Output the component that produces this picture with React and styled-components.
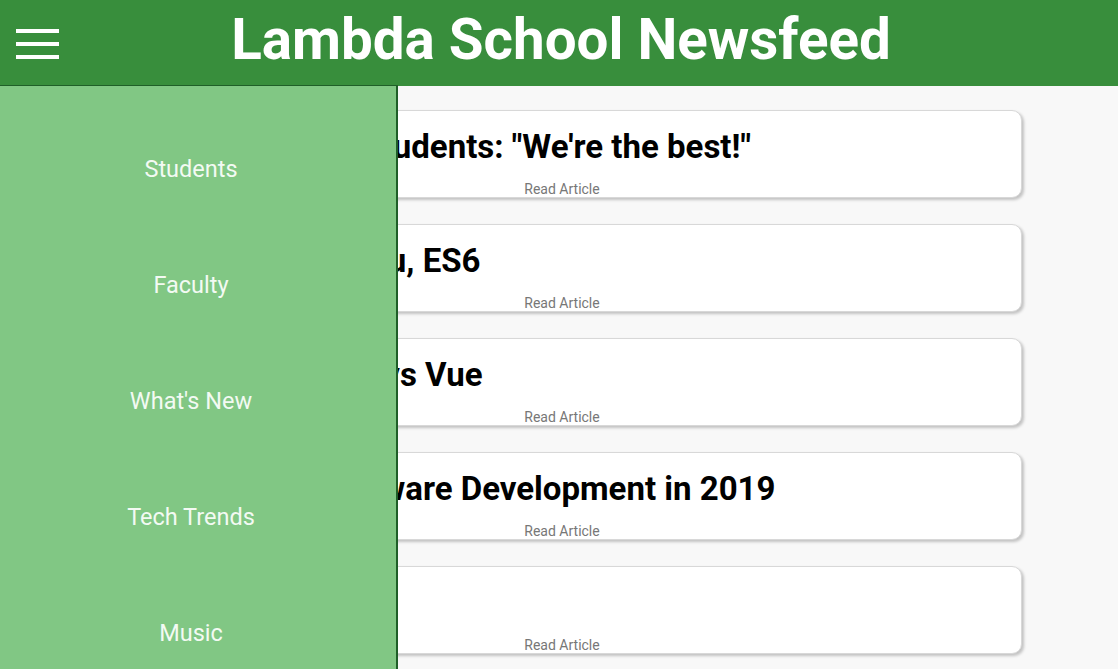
import React from 'react';
import styled, { createGlobalStyle } from 'styled-components';

// ---- data
const articles = [
  { title: 'Lambda School Students: "We\'re the best!"' },
  { title: 'Javascript and You, ES6' },
  { title: 'React vs Angular vs Vue' },
  { title: 'Professional Software Development in 2019' },
  { title: 'Lambda Labs' },
];

const menuItems = ['Students', 'Faculty', "What's New", 'Tech Trends', 'Music', 'Log Out'];

// ---- page
const App = () => {
  return (
    <>
      <GlobalStyle />
      <Header>
        <MenuButton aria-label="menu">
          <Bar />
          <Bar />
          <Bar />
        </MenuButton>
        <Title>Lambda School Newsfeed</Title>
        <span />
      </Header>

      <Menu>
        <MenuList>
          {menuItems.map((item) => (
            <MenuItem key={item}>{item}</MenuItem>
          ))}
        </MenuList>
      </Menu>

      <Articles>
        {articles.map((a, i) => (
          <Article key={i}>
            <ArticleTitle>{a.title}</ArticleTitle>
            <ExpandButton>Read Article</ExpandButton>
          </Article>
        ))}
      </Articles>
    </>
  );
};

export default App;

// ------ UI component definition
const GlobalStyle = createGlobalStyle`
  html, body {
    margin: 0;
    padding: 0;
    height: 100%;
    overflow: hidden;
    background: #f8f8f8;
    font-family: Roboto, "Liberation Sans", sans-serif;
  }
`;

const Header = styled.header`
  height: 86px;
  background: #388e3c;
  display: grid;
  grid-template-columns: 1fr auto 1fr;
  align-items: center;
  padding: 0 16px;
  box-sizing: border-box;
`;

const MenuButton = styled.div`
  width: 43px;
  display: flex;
  flex-direction: column;
  gap: 9px;
  margin-top: 1px;
`;

const Bar = styled.span`
  display: block;
  height: 4px;
  background: #ffffff;
`;

const Title = styled.h1`
  margin: 0 0 0 4px;
  color: #ffffff;
  font-size: 56.5px;
  font-weight: 700;
  line-height: 1;
  padding-bottom: 6px;
  white-space: nowrap;
`;

const Menu = styled.nav`
  position: fixed;
  top: 85px;
  left: 0;
  bottom: 0;
  width: 396px;
  background: #81c784;
  border-top: 1px solid #1f5f28;
  border-right: 2px solid #1f5f28;
  z-index: 2;
`;

const MenuList = styled.ul`
  list-style: none;
  margin: 0;
  padding: 25px 14px 0 0;
`;

const MenuItem = styled.li`
  height: 116px;
  display: flex;
  align-items: center;
  justify-content: center;
  color: #f3faf3;
  font-size: 23.5px;
`;

const Articles = styled.main`
  padding-top: 24px;
  display: flex;
  flex-direction: column;
  gap: 26px;
`;

const Article = styled.article`
  width: 920px;
  height: 88px;
  margin-left: 102px;
  box-sizing: border-box;
  background: #ffffff;
  border: 1px solid #d8d8d8;
  border-radius: 10px;
  box-shadow: 2px 2px 3px rgba(0, 0, 0, 0.22);
  padding: 16px 21px 0;
  overflow: hidden;
  display: flex;
  flex-direction: column;
`;

const ArticleTitle = styled.h2`
  margin: 0;
  font-size: 33px;
  font-weight: 700;
  color: #000000;
  white-space: nowrap;
`;

const ExpandButton = styled.span`
  margin-top: auto;
  align-self: center;
  font-size: 14px;
  color: #777777;
  cursor: pointer;
`;
